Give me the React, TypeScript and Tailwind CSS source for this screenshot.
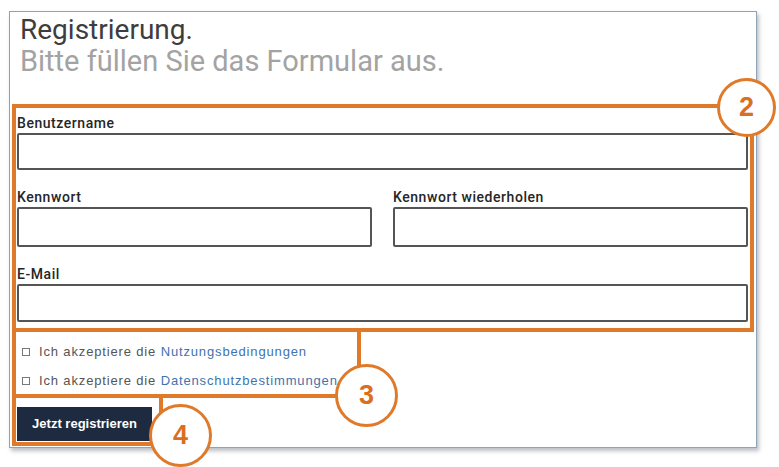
import React from 'react';

const labelCls = 'block text-[14px] leading-[15px] text-[#262626] font-medium tracking-[0.55px]';
const inputCls = 'block w-full border-2 border-[#555] rounded-[2px] bg-white';

function Badge({ n, className }: { n: string; className: string }) {
  return (
    <div
      className={`absolute rounded-full border-[3px] border-[#df7a2b] bg-white flex items-center justify-center text-[#d8701f] font-bold text-[27px] ${className}`}
      style={{ fontFamily: '"Liberation Sans", Arial, sans-serif' }}
    >
      {n}
    </div>
  );
}

export default function App() {
  return (
    <div
      className="relative w-[779px] h-[467px] bg-white overflow-hidden"
      style={{ fontFamily: '"Liberation Sans", Arial, sans-serif' }}
    >
      {/* Form panel */}
      <div className="ml-[9px] mt-[11px] w-[748px] h-[437px] border border-[#8ea2b8] bg-white shadow-[2px_3px_4px_rgba(60,70,90,0.35)]">
        <div className="pl-[10px] pt-[1px]" style={{ fontFamily: 'Roboto, "Liberation Sans", sans-serif' }}>
          <h1 className="text-[28px] leading-[33px] text-[#3d3d3d]">Registrierung.</h1>
          <p className="text-[29px] leading-[31px] text-[#a3a3a3]">Bitte füllen Sie das Formular aus.</p>
        </div>

        <form className="pl-[7px] pr-[8px] pt-[39px]" style={{ fontFamily: 'Roboto, "Liberation Sans", sans-serif' }}>
          <label className={labelCls}>Benutzername</label>
          <div className={`${inputCls} h-[37px] mt-[2px]`} />

          <div className="flex gap-[21px] mt-[20px]">
            <div className="flex-1">
              <label className={labelCls}>Kennwort</label>
              <div className={`${inputCls} h-[40px] mt-[2px]`} />
            </div>
            <div className="flex-1">
              <label className={labelCls}>Kennwort wiederholen</label>
              <div className={`${inputCls} h-[40px] mt-[2px]`} />
            </div>
          </div>

          <label className={`${labelCls} mt-[20px]`}>E-Mail</label>
          <div className={`${inputCls} h-[38px] mt-[2px]`} />

          <div
            className="mt-[23px] flex flex-col gap-[15px] pl-[5px] text-[13px] leading-[14px] tracking-[0.85px] text-[#555]"
            style={{ fontFamily: '"Liberation Sans", Arial, sans-serif' }}
          >
            <div className="flex items-center gap-[9px]">
              <span className="w-[8px] h-[8px] border border-[#777]" />
              <span>
                Ich akzeptiere die <span className="text-[#3f73ad]">Nutzungsbedingungen</span>
              </span>
            </div>
            <div className="flex items-center gap-[9px]">
              <span className="w-[8px] h-[8px] border border-[#777]" />
              <span>
                Ich akzeptiere die <span className="text-[#3f73ad]">Datenschutzbestimmungen</span>
              </span>
            </div>
          </div>

          <button
            type="button"
            className="mt-[19px] w-[135px] h-[34px] bg-[#1d2a3f] text-white text-[13px] font-bold"
            style={{ fontFamily: '"Liberation Sans", Arial, sans-serif' }}
          >
            Jetzt registrieren
          </button>
        </form>
      </div>

      {/* Annotation overlays */}
      <div className="absolute left-[12px] top-[104px] w-[742px] h-[228px] border-4 border-[#df7a2b]" />
      <div className="absolute left-[12px] top-[328px] w-[349px] h-[70px] border-4 border-t-0 border-[#df7a2b]" />
      <div className="absolute left-[12px] top-[394px] w-[151px] h-[52px] border-4 border-t-0 border-[#df7a2b]" />
      <Badge n="2" className="left-[717px] top-[78px] w-[59px] h-[59px]" />
      <Badge n="3" className="left-[335px] top-[364px] w-[63px] h-[63px]" />
      <Badge n="4" className="left-[149px] top-[404px] w-[63px] h-[63px]" />
    </div>
  );
}
